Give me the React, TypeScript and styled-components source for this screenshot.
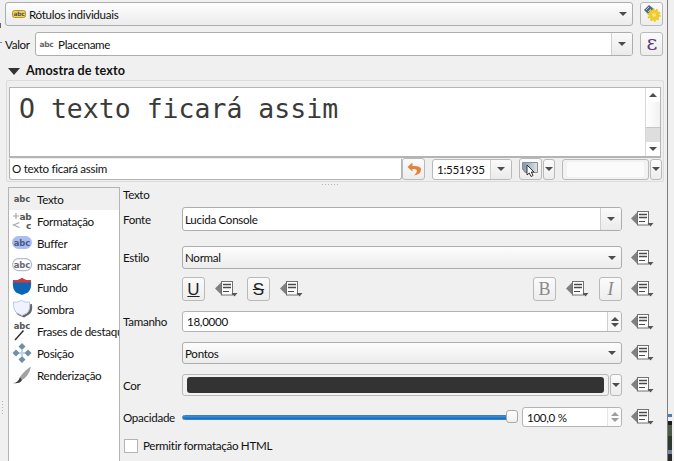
import React from "react";
import styled, { createGlobalStyle } from "styled-components";

const Global = createGlobalStyle`
  html, body { margin: 0; padding: 0; background: #f0f0f0; overflow: hidden; }
  body { font-family: "Lato", "Open Sans", sans-serif; font-size: 11.6px; letter-spacing: -0.3px; color: #111; }
`;

const Page = styled.div`
  width: 674px; height: 461px; display: flex; overflow: hidden; background: #f0f0f0;
`;
const Main = styled.div`
  width: 668px; height: 461px; flex: none; display: flex; flex-direction: column;
  padding: 2px 4px 0 5px; box-sizing: border-box; border-right: 1px solid #7d7d7d;
  background: linear-gradient(#666, #666) 0 23px / 1px 5px no-repeat, linear-gradient(#888, #888) 0 42px / 2px 1px no-repeat;
`;
const Strip = styled.div`
  flex: 1; display: flex; flex-direction: column; justify-content: flex-end;
  background: #f0f0f0;
`;
const MapBit = styled.div`
  width: 4px; height: 47px; background: linear-gradient(180deg, #4a80b0 0 3px, #f0f0f0 3px 7px, #1c1c1c 7px 11px, #4a5c48 11px 22px, #2f3b30 22px 36px, #6f8aa0 36px 40px, #2a2a2a 40px);
`;
const Row = styled.div<{ $mt?: number }>`
  display: flex; align-items: center; gap: 7px; margin-top: ${p => p.$mt ?? 0}px;
`;
const ValorLabel = styled.span`
  width: 23px; flex: none; white-space: nowrap;
`;
const ComboBox = styled.div<{ $h?: number; $white?: boolean }>`
  flex: 1; min-width: 0; height: ${p => p.$h ?? 24}px; box-sizing: border-box;
  border: 1px solid #adadad; border-radius: 3px; display: flex; align-items: center;
  background: ${p => p.$white ? "#fff" : "linear-gradient(#fdfdfd, #ececec)"};
  overflow: hidden;
`;
const ComboText = styled.div<{ $pl?: number; $gap?: number }>`
  flex: 1; min-width: 0; display: flex; align-items: center; gap: ${p => p.$gap ?? 3}px; padding-left: ${p => p.$pl ?? 2}px;
  white-space: nowrap; overflow: hidden;
`;
const DropPart = styled.div<{ $w?: number; $line?: boolean }>`
  width: ${p => p.$w ?? 19}px; flex: none; align-self: stretch; display: flex; align-items: center; justify-content: center;
  border-left: ${p => p.$line ? "1px solid #cfcfcf" : "none"};
  background: ${p => p.$line ? "linear-gradient(#fafafa, #ebebeb)" : "transparent"};
`;
const Caret = styled.i`
  display: block; width: 0; height: 0;
  border-left: 4px solid transparent; border-right: 4px solid transparent; border-top: 4px solid #4d4d4d;
`;
const ToolButton = styled.button<{ $w?: number; $h?: number; $ml?: number }>`
  width: ${p => p.$w ?? 23}px; height: ${p => p.$h ?? 24}px; flex: none; padding: 0; box-sizing: border-box;
  margin-left: ${p => p.$ml ?? 0}px;
  border: 1px solid #b9b9b9; border-radius: 3px; background: linear-gradient(#fbfbfb, #ededed);
  display: flex; align-items: center; justify-content: center; font-family: inherit; color: #222;
`;
const SectionHead = styled.div`
  display: flex; align-items: center; gap: 6px; margin: 6px 0 0 3px; height: 16px;
  font-weight: 700; font-size: 12.6px; letter-spacing: 0.1px; color: #111;
`;
const Triangle = styled.i`
  display: block; width: 0; height: 0; margin-top: 2px;
  border-left: 6px solid transparent; border-right: 6px solid transparent; border-top: 7px solid #333;
`;
const SampleGroup = styled.div`
  margin: 2px 0 0 1px; width: 658px; height: 102px; box-sizing: border-box; padding: 6px 2px 3px 2px;
  border: 1px solid #dcdcdc; border-radius: 2px; display: flex; flex-direction: column; background: #efefef;
`;
const Preview = styled.div`
  height: 71px; flex: none; display: flex; background: #fff; border: 1px solid #b4b4b4; border-bottom: 2px solid #b4b4b4; box-sizing: border-box;
`;
const PreviewText = styled.div`
  flex: 1; padding: 4px 0 0 9px; font-family: "DejaVu Sans Mono", monospace; font-size: 26.5px; letter-spacing: 0; line-height: 34px;
  color: #3a3a3a; white-space: nowrap; overflow: hidden;
`;
const Scroll = styled.div`
  width: 14px; flex: none; display: flex; flex-direction: column; border-left: 1px solid #d8d8d8; background: #fff;
`;
const ScrollCap = styled.div`
  height: 14px; flex: none; display: flex; align-items: center; justify-content: center;
`;
const CaretUp = styled.i`
  display: block; width: 0; height: 0;
  border-left: 4px solid transparent; border-right: 4px solid transparent; border-bottom: 4px solid #4d4d4d;
`;
const ScrollTrack = styled.div`
  flex: 1; background: linear-gradient(90deg, #fff, #f1f1f1);
`;
const ScrollThumb = styled.div`
  height: 14px; flex: none; background: #dedede; border-top: 1px solid #c6c6c6;
`;
const SampleRow = styled.div`
  display: flex; align-items: center; height: 22px; flex: none;
`;
const SampleInput = styled.div`
  width: 393px; height: 21px; flex: none; box-sizing: border-box; background: #fff; border: 1px solid #b4b4b4; border-top: none; border-radius: 0 0 3px 3px;
  padding-left: 2px; display: flex; align-items: center; white-space: nowrap;
`;
const ScaleBox = styled.div`
  width: 80px; height: 21px; flex: none; margin-left: 7px; box-sizing: border-box; display: flex; align-items: center;
  border: 1px solid #b9b9b9; border-radius: 3px; background: #fff; overflow: hidden; padding-left: 4px;
`;
const ScaleValue = styled.div`flex: 1;`;
const ColorButton = styled.div<{ $wide?: boolean }>`
  ${p => p.$wide ? "flex: 1; margin-left: 0; height: 22px;" : "width: 87px; flex: none; margin-left: 7px; height: 21px;"}
  box-sizing: border-box; border: 1px solid #b9b9b9; border-radius: 3px;
  padding: 2px 4px; background: #f2f2f2; display: flex;
`;
const ColorInner = styled.div<{ $c: string }>`
  flex: 1; background: ${p => p.$c}; border-radius: 3px;
`;
const SmallDrop = styled.div<{ $ml?: number; $w?: number; $h?: number }>`
  width: ${p => p.$w ?? 12}px; height: ${p => p.$h ?? 21}px; flex: none; margin-left: ${p => p.$ml ?? 1}px; box-sizing: border-box;
  border: 1px solid #b9b9b9; border-radius: 3px; background: linear-gradient(#fbfbfb, #ededed);
  display: flex; align-items: center; justify-content: center;
`;
const Splitter = styled.div`
  height: 5px; flex: none; display: flex; justify-content: center; align-items: center; gap: 2px; margin-left: -8px;
`;
const Dot = styled.i`
  display: block; width: 1px; height: 1px; background: #b5b5b5;
`;
const Body = styled.div`
  flex: 1; min-height: 0; display: flex; position: relative;
`;
const GripDots = styled.div`
  position: absolute; left: -3px; top: 214px; display: flex; flex-direction: column; gap: 2px;
`;
const ListPane = styled.div`
  width: 112px; flex: none; margin-left: 3px; box-sizing: border-box; background: #fff; border: 1px solid #b4b4b4; border-bottom: none;
  overflow: hidden;
`;
const ListItem = styled.div<{ $active?: boolean }>`
  height: 22px; display: flex; align-items: center; gap: 4px; padding-left: 4px; white-space: nowrap;
  background: ${p => p.$active ? "#f0f0f0" : "#fff"};
`;
const ItemIcon = styled.svg`
  width: 20px; height: 20px; flex: none; display: block; overflow: visible;
`;
const Form = styled.div`
  flex: 1; min-width: 0; padding: 0 0 0 3px; display: flex; flex-direction: column;
`;
const FormTitle = styled.div`
  height: 14px; line-height: 14px; margin-top: 1px;
`;
const FormRow = styled.div<{ $mt: number; $h: number }>`
  display: flex; align-items: center; margin-top: ${p => p.$mt}px; height: ${p => p.$h}px; flex: none;
`;
const FieldLabel = styled.div`
  width: 59px; flex: none; white-space: nowrap;
`;
const Field = styled.div`
  width: 440px; flex: none; display: flex; align-items: center; height: 100%;
`;
const DataSlot = styled.div`
  width: 24px; flex: none; margin-left: 9px; display: flex; align-items: center;
`;
const StyleButtons = styled.div`
  width: 440px; flex: none; display: flex; align-items: center; justify-content: space-between; height: 100%;
`;
const ButtonGroup = styled.div<{ $gap: number }>`
  display: flex; align-items: center; gap: ${p => p.$gap}px;
`;
const LetterU = styled.span`
  font-size: 17px; text-decoration: underline; color: #222; line-height: 1; font-family: "Liberation Sans", sans-serif;
`;
const LetterS = styled.span`
  font-size: 17px; text-decoration: line-through; color: #222; line-height: 1; font-family: "Liberation Sans", sans-serif;
`;
const LetterB = styled.span`
  font-size: 18px; color: #8a8a8a; font-family: "Liberation Serif", serif; line-height: 1;
`;
const LetterI = styled.span`
  font-size: 18px; font-style: italic; color: #8a8a8a; font-family: "Liberation Serif", serif; line-height: 1;
`;
const SpinBox = styled.div<{ $w?: number; $h?: number; $ml?: number }>`
  flex: none; width: ${p => p.$w ?? 440}px; height: ${p => p.$h ?? 21}px; box-sizing: border-box; margin-left: ${p => p.$ml ?? 0}px;
  border: 1px solid #b4b4b4; border-radius: 3px; background: #fff; display: flex; align-items: center; overflow: hidden;
`;
const SpinValue = styled.div`
  flex: 1; padding-left: 4px;
`;
const SpinArrows = styled.div<{ $dim?: boolean }>`
  width: 13px; flex: none; align-self: stretch; display: flex; flex-direction: column; align-items: center; justify-content: center; gap: 2px;
  border-left: 1px solid #cfcfcf; background: #f7f7f7; opacity: ${p => p.$dim ? 0.55 : 1};
`;
const Slider = styled.div`
  width: 336px; flex: none; height: 100%; display: flex; align-items: center; position: relative;
`;
const SliderGroove = styled.div`
  width: 330px; height: 5px; background: linear-gradient(#3f8fdc, #0b6cc4); border-radius: 3px; border: 1px solid #3f7fb8; box-sizing: border-box;
`;
const SliderHandle = styled.div`
  position: absolute; left: 324px; top: 3px; width: 12px; height: 13px; box-sizing: border-box; background: linear-gradient(#fff, #efefef); border: 1px solid #a8a8a8; border-radius: 3px;
`;
const CheckBox = styled.div`
  width: 14px; height: 14px; flex: none; box-sizing: border-box; margin-left: 1px; border: 1px solid #b4b4b4; background: #fff;
`;
const CheckLabel = styled.div`
  margin-left: 5px; white-space: nowrap;
`;

const F = "DejaVu Sans, sans-serif";
const AbcText = ({ x = 9, y = 13, size = 8.4, fill = "#555" }: { x?: number; y?: number; size?: number; fill?: string }) => (
  <text x={x} y={y} fontFamily={F} fontWeight="700" fontSize={size} letterSpacing="0" textAnchor="middle" fill={fill}>abc</text>
);

const icons: Record<string, React.ReactNode> = {
  texto: <AbcText x={9} y={13} />,
  format: (
    <>
      <path d="M0 5h6M3 2v6M6.500 11.500l-6 2.500 6 2.500" stroke="#a8a8a8" strokeWidth="1.200" fill="none" />
      <text x="12.500" y="9" fontFamily={F} fontWeight="700" fontSize="9" textAnchor="middle" fill="#555">ab</text>
      <text x="15.500" y="17.500" fontFamily={F} fontWeight="700" fontSize="9" textAnchor="middle" fill="#555">c</text>
    </>
  ),
  buffer: (
    <>
      <rect x="-1" y="3" width="20" height="13" rx="6.500" fill="#a8bdf2" />
      <AbcText x={9} y={12.800} fill="#4c5a80" />
    </>
  ),
  masc: (
    <>
      <rect x="-0.400" y="3.600" width="19" height="12" rx="6" fill="#fff" stroke="#b4bccb" strokeWidth="1.200" />
      <AbcText x={9} y={12.800} fill="#667" />
    </>
  ),
  fundo: (
    <>
      <path d="M0 3q5 1 9-2 4 3 9 2 1 9-3 12.500l-6 2.500-6-2.500Q-1 12 0 3Z" fill="#0f65b5" />
      <path d="M0 3q5 1 9-2 4 3 9 2v2.500H0Z" fill="#d23a3a" />
    </>
  ),
  sombra: (
    <>
      <path d="M2 5q5 1 9-1.500 4 2.500 8 1.500 1 8-3 10.500l-5 3-6-2.500Q1 13 2 5Z" fill="#666" />
      <path d="M0.500 3q4 1 8-1.500 4 2.500 8 1.500 1 8-2.500 11l-5 2.500-5-2.500Q0 11 .5 3Z" fill="#eef3ff" stroke="#bcc9e6" />
    </>
  ),
  frases: (
    <>
      <AbcText x={9} y={8} />
      <path d="M2 19 10.500 9.500" stroke="#333" strokeWidth="1.500" />
    </>
  ),
  posicao: (
    <>
      <path d="M9 0l3.500 3.500L9 7 5.500 3.500ZM9 13l3.500 3.500L9 20l-3.500-3.500ZM3 6.500 6.500 10 3 13.500-.5 10ZM15 6.500l3.500 3.500-3.500 3.500-3.500-3.500Z" fill="#6f8fa8" />
      <path d="M8 6.500h2v7H8ZM6 9h6v2H6Z" fill="#c4d2de" />
    </>
  ),
  render: (
    <>
      <path d="M18 1.500Q12 5 7 12l2 3Q16 11 18 1.500Z" fill="#a2a2a2" />
      <path d="M0 18q5 0 7-6l2 3q-2 4-9 3Z" fill="#3d3d3d" />
    </>
  ),
};

const items = [
  ["texto", "Texto"], ["format", "Formatação"], ["buffer", "Buffer"], ["masc", "mascarar"], ["fundo", "Fundo"],
  ["sombra", "Sombra"], ["frases", "Frases de destaque"], ["posicao", "Posição"], ["render", "Renderização"],
];

const DataDefined = () => (
  <svg width="23" height="16" viewBox="0 0 23 16">
    <path d="M7 0.500 0 7.500l7 7Z" fill="#808080" />
    <rect x="6.500" y="0.500" width="11" height="13.500" fill="#fff" stroke="#707070" />
    <path d="M8 3.500h8M8 6.500h8" stroke="#4a4a4a" strokeWidth="1.500" />
    <path d="M8 10.500h6" stroke="#4a4a4a" />
    <path d="M16.500 12h6l-3 3.500Z" fill="#555" />
  </svg>
);

const Gear = () => (
  <svg width="20" height="20" viewBox="0 0 20 20">
    <path d="M2 6l5-5 5 4-5 6Z" fill="#4c6b84" />
    <path d="M4 6l3-3M6 8l3-3" stroke="#b4c6d4" />
    <circle cx="12" cy="11" r="5.500" fill="#efce2c" />
    <circle cx="12" cy="11" r="5.800" fill="none" stroke="#e8c62a" strokeWidth="1.800" strokeDasharray="1.800 1.800" />
    <circle cx="12" cy="11" r="1.800" fill="#f7e78a" />
  </svg>
);
const LabelTag = () => (
  <svg width="14" height="8" viewBox="0 0 14 8">
    <rect x="0.500" y="0.500" width="13" height="7" rx="2" fill="#f4d35a" stroke="#b8962a" />
    <text x="7" y="6.300" textAnchor="middle" fontSize="6" fontWeight="700" fontFamily={F} fill="#555">abc</text>
  </svg>
);
const ValueTag = () => (
  <svg width="15" height="10" viewBox="0 0 15 10">
    <text x="7.500" y="8" textAnchor="middle" fontSize="7.500" fontWeight="700" fontFamily={F} fill="#666">abc</text>
  </svg>
);
const Undo = () => (
  <svg width="14" height="14" viewBox="0 0 14 14">
    <path d="M5.500 0.500 0.500 5l5 4.500V7q4-.5 4.500 1.500.2 2-3 5 6.500-1 7-5.500.5-4.500-8.500-4Z" fill="#e5813c" />
  </svg>
);
const CursorIcon = () => (
  <svg width="17" height="15" viewBox="0 0 17 15">
    <defs>
      <linearGradient id="cg" x1="0" x2="1">
        <stop offset="0" stopColor="#7f95aa" />
        <stop offset="1" stopColor="#dfe4e9" />
      </linearGradient>
    </defs>
    <path d="M0.500 0.500h15v10H3L.5 7Z" fill="url(#cg)" stroke="#8d8d8d" />
    <path d="M5 3v10l2.300-2 1.700 3.500 2-1-1.700-3.500H12Z" fill="#fff" stroke="#222" strokeWidth="0.900" />
  </svg>
);
const Epsilon = () => (
  <svg width="20" height="20" viewBox="0 0 20 20">
    <text x="10" y="15.500" textAnchor="middle" fontSize="21" fontFamily="DejaVu Serif, serif" fill="#5b3a78">ε</text>
  </svg>
);

function Combo({ children, white, line, h, pl, gap }: { children?: React.ReactNode; white?: boolean; line?: boolean; h?: number; pl?: number; gap?: number }) {
  return (
    <ComboBox $white={white} $h={h}>
      <ComboText $pl={pl} $gap={gap}>{children}</ComboText>
      <DropPart $line={line} $w={line ? 20 : 19}><Caret /></DropPart>
    </ComboBox>
  );
}

const Spin = ({ dim }: { dim?: boolean }) => (
  <SpinArrows $dim={dim}><CaretUp /><Caret /></SpinArrows>
);

const FieldRow = ({ label, mt, h, children }: { label?: string; mt: number; h: number; children: React.ReactNode }) => (
  <FormRow $mt={mt} $h={h}>
    <FieldLabel>{label}</FieldLabel>
    <Field>{children}</Field>
    <DataSlot><DataDefined /></DataSlot>
  </FormRow>
);

export default function App() {
  return (
    <Page>
      <Global />
      <Main>
        <Row>
          <Combo pl={6}><LabelTag />Rótulos individuais</Combo>
          <ToolButton><Gear /></ToolButton>
        </Row>
        <Row $mt={6}>
          <ValorLabel>Valor</ValorLabel>
          <Combo white line pl={3} gap={4}><ValueTag />Placename</Combo>
          <ToolButton><Epsilon /></ToolButton>
        </Row>
        <SectionHead><Triangle />Amostra de texto</SectionHead>
        <SampleGroup>
          <Preview>
            <PreviewText>O texto ficará assim</PreviewText>
            <Scroll>
              <ScrollCap><CaretUp /></ScrollCap>
              <ScrollTrack />
              <ScrollThumb />
              <ScrollCap><Caret /></ScrollCap>
            </Scroll>
          </Preview>
          <SampleRow>
            <SampleInput>O texto ficará assim</SampleInput>
            <ToolButton $w={23} $h={22}><Undo /></ToolButton>
            <ScaleBox><ScaleValue>1:551935</ScaleValue><DropPart $w={20} $line><Caret /></DropPart></ScaleBox>
            <ToolButton $w={23} $h={22} $ml={7}><CursorIcon /></ToolButton>
            <SmallDrop><Caret /></SmallDrop>
            <ColorButton><ColorInner $c="#fbfbfb" /></ColorButton>
            <SmallDrop><Caret /></SmallDrop>
          </SampleRow>
        </SampleGroup>
        <Splitter>{Array.from({ length: 6 }).map((_, i) => <Dot key={i} />)}</Splitter>
        <Body>
          <GripDots>{Array.from({ length: 5 }).map((_, i) => <Dot key={i} />)}</GripDots>
          <ListPane>
            {items.map(([k, t], i) => (
              <ListItem key={k} $active={i === 0}>
                <ItemIcon viewBox="0 0 20 20">{icons[k]}</ItemIcon>
                {t}
              </ListItem>
            ))}
          </ListPane>
          <Form>
            <FormTitle>Texto</FormTitle>
            <FieldRow label="Fonte" mt={5} h={24}><Combo white line>Lucida Console</Combo></FieldRow>
            <FieldRow label="Estilo" mt={15} h={23}><Combo h={23}>Normal</Combo></FieldRow>
            <FormRow $mt={8} $h={24}>
              <FieldLabel />
              <StyleButtons>
                <ButtonGroup $gap={9.5}>
                  <ToolButton><LetterU>U</LetterU></ToolButton>
                  <DataDefined />
                  <ToolButton><LetterS>S</LetterS></ToolButton>
                  <DataDefined />
                </ButtonGroup>
                <ButtonGroup $gap={10}>
                  <ToolButton><LetterB>B</LetterB></ToolButton>
                  <DataDefined />
                  <ToolButton><LetterI>I</LetterI></ToolButton>
                </ButtonGroup>
              </StyleButtons>
              <DataSlot><DataDefined /></DataSlot>
            </FormRow>
            <FieldRow label="Tamanho" mt={10} h={21}><SpinBox><SpinValue>18,0000</SpinValue><Spin /></SpinBox></FieldRow>
            <FieldRow mt={10} h={22}><Combo h={22}>Pontos</Combo></FieldRow>
            <FieldRow label="Cor" mt={10} h={22}>
              <ColorButton $wide><ColorInner $c="#333333" /></ColorButton>
              <SmallDrop $h={22}><Caret /></SmallDrop>
            </FieldRow>
            <FieldRow label="Opacidade" mt={11} h={20}>
              <Slider><SliderGroove /><SliderHandle /></Slider>
              <SpinBox $w={100} $h={20} $ml={4}><SpinValue>100,0 %</SpinValue><Spin dim /></SpinBox>
            </FieldRow>
            <FormRow $mt={11} $h={15}>
              <CheckBox />
              <CheckLabel>Permitir formatação HTML</CheckLabel>
            </FormRow>
          </Form>
        </Body>
      </Main>
      <Strip><MapBit /></Strip>
    </Page>
  );
}
